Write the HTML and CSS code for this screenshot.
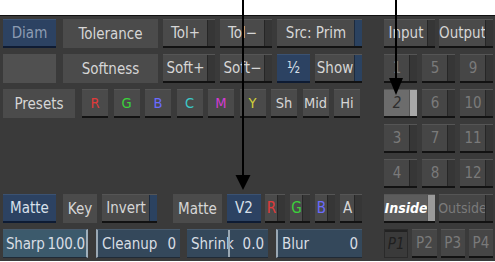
FILE: index.html
```html
<!DOCTYPE html>
<html>
<head>
<meta charset="utf-8">
<link rel="stylesheet" href="styles.css">
</head>
<body>
<div class="screen">
  <div class="topstrip"></div>
  <div class="panel">
    <div class="left">
      <div class="row">
        <div class="b blue dim w53">Diam</div>
        <div class="b flat w95 ml7">Tolerance</div>
        <div class="b raised tab w52 ml5">Tol+</div>
        <div class="b raised tab w52 ml5">Tol−</div>
        <div class="b raised tab bluetab w85 ml5">Src: Prim</div>
      </div>
      <div class="row">
        <div class="b blank w53"></div>
        <div class="b flat w95 ml7">Softness</div>
        <div class="b raised tab w52 ml5">Soft+</div>
        <div class="b raised tab w52 ml5">Soft−</div>
        <div class="b blue w33 ml5">½</div>
        <div class="b raised tab bluetab w47 ml5">Show</div>
      </div>
      <div class="row presets">
        <div class="b flat w72">Presets</div>
        <div class="b raised sq c-r">R</div>
        <div class="b raised sq c-g">G</div>
        <div class="b raised sq c-b">B</div>
        <div class="b raised sq c-c">C</div>
        <div class="b raised sq c-m">M</div>
        <div class="b raised sq c-y">Y</div>
        <div class="b raised sq">Sh</div>
        <div class="b raised sq">Mid</div>
        <div class="b raised sq">Hi</div>
      </div>
      <div class="row"></div>
      <div class="row"></div>
      <div class="row">
        <div class="b blue w53">Matte</div>
        <div class="b flat w34 ml7">Key</div>
        <div class="b raised tab bluetab w55 ml5">Invert</div>
        <div class="b flat w49 ml16">Matte</div>
        <div class="b blue w34 ml5">V2</div>
        <div class="b raised tab w20 ml4 c-r">R</div>
        <div class="b raised tab w20 ml5 c-g">G</div>
        <div class="b raised tab w20 ml5 c-b">B</div>
        <div class="b raised tab w22 ml5">A</div>
      </div>
      <div class="row">
        <div class="f sharp w85"><span>Sharp</span><span>100.0</span></div>
        <div class="f lline w84 ml8"><span>Cleanup</span><span>0</span></div>
        <div class="f w81 ml7 shrink"><span>Shrink</span><span>0.0</span></div>
        <div class="f lline w86 ml8"><span>Blur</span><span>0</span></div>
      </div>
    </div>
    <div class="right">
      <div class="two">
        <div class="b raised tab">Input</div>
        <div class="b raised tab">Output</div>
      </div>
      <div class="three">
        <div class="b raised tab num">1</div>
        <div class="b raised tab num">5</div>
        <div class="b raised tab num">9</div>
      </div>
      <div class="three">
        <div class="b raised tab num sel">2</div>
        <div class="b raised tab num">6</div>
        <div class="b raised tab num">10</div>
      </div>
      <div class="three">
        <div class="b raised tab num">3</div>
        <div class="b raised tab num">7</div>
        <div class="b raised tab num">11</div>
      </div>
      <div class="three">
        <div class="b raised tab num">4</div>
        <div class="b raised tab num">8</div>
        <div class="b raised tab num">12</div>
      </div>
      <div class="two">
        <div class="b raised tab inside">Inside</div>
        <div class="b raised tab num small">Outside</div>
      </div>
      <div class="four">
        <div class="b pone">P1</div>
        <div class="b raised num">P2</div>
        <div class="b raised num">P3</div>
        <div class="b raised num">P4</div>
      </div>
    </div>
  </div>
  <svg class="arrows" width="495" height="262" viewBox="0 0 495 262">
    <line x1="243" y1="0" x2="243" y2="177" stroke="#000" stroke-width="2"/>
    <polygon points="235.5,175 250.5,175 243,190" fill="#000"/>
    <line x1="396" y1="0" x2="396" y2="80" stroke="#000" stroke-width="2"/>
    <polygon points="389,78 403,78 396,95" fill="#000"/>
  </svg>
</div>
</body>
</html>
```
FILE: styles.css
```css
html, body {
  margin: 0;
  padding: 0;
  background: #fff;
}
.screen {
  position: relative;
  width: 495px;
  height: 262px;
  overflow: hidden;
  font-family: "DejaVu Sans Condensed", "DejaVu Sans", sans-serif;
  font-size: 15px;
}
.topstrip {
  height: 15px;
  background: #fff;
}
.panel {
  height: 246px;
  background: #3a3a3a;
  border-top: 1px solid #111;
  display: flex;
  padding-top: 3px;
  box-sizing: border-box;
}
.left {
  width: 366px;
  padding-left: 3px;
  display: grid;
  grid-template-rows: repeat(7, 29px);
  row-gap: 6px;
}
.right {
  margin-left: 15px;
  width: 109px;
  display: grid;
  grid-template-rows: repeat(7, 29px);
  row-gap: 6px;
}
.row {
  display: flex;
  align-items: stretch;
}
.presets { gap: 5.5px; }
.presets .w72 { margin-right: 1.5px; }
.two {
  display: grid;
  grid-template-columns: 51px 54px;
  column-gap: 4px;
}
.three {
  display: grid;
  grid-template-columns: repeat(3, 1fr);
  column-gap: 5px;
}
.four {
  display: grid;
  grid-template-columns: repeat(4, 1fr);
  column-gap: 4px;
}
.b {
  position: relative;
  display: flex;
  align-items: center;
  justify-content: center;
  box-sizing: border-box;
  color: #d6d6d6;
  white-space: nowrap;
}
.flat { background: #4b4b4b; }
.blank { background: #505050; }
.raised {
  background: #4a4a4a;
  border-top: 1px solid #555;
  box-shadow: 0 2px 0 #121212;
  height: 27px;
}
.tab { padding-right: 7px; }
.tab::after {
  content: "";
  position: absolute;
  right: 0;
  top: 0;
  bottom: 0;
  width: 7px;
  background: #363636;
  border-left: 1px solid #262626;
}
.bluetab::after {
  background: #2b4260;
  border-left: 1px solid #1c2a3e;
}
.blue {
  background: #2c4262;
  border-top: 1px solid #3b5272;
  border-bottom: 2px solid #0e1b33;
  color: #d8e0ea;
}
.dim { color: #8d9cb2; }
.sq { width: 26px; padding: 0; font-size: 14.5px; }
.c-r { color: #e03a3a; }
.c-g { color: #3bd23b; }
.c-b { color: #6b6bff; }
.c-c { color: #3cc8c8; }
.c-m { color: #d23cd2; }
.c-y { color: #d0d03a; }
.num { color: #7a7a7a; background: #464646; }
.small { font-size: 14px; }
.sel { background: #6c6c6c; color: #2e2e2e; font-style: italic; }
.sel::after { background: #a8a8a8; border-left: 1px solid #555; }
.inside {
  background: #5c5c5c;
  color: #fff;
  font-style: italic;
  font-weight: bold;
  font-size: 14px;
}
.inside::after { background: #9a9a9a; border-left: 1px solid #555; }
.pone {
  background: #3a3a3a;
  border: 1px solid #2a2a2a;
  box-shadow: inset 0 2px 0 #222;
  color: #1f1f1f;
  font-style: italic;
}
.f {
  position: relative;
  display: flex;
  align-items: center;
  justify-content: space-between;
  padding: 0 4px 0 4px;
  box-sizing: border-box;
  background: #34485b;
  border-top: 1px solid #485a6c;
  border-bottom: 1px solid #1f2a36;
  color: #d8dde4;
}
.sharp {
  background: #3c5a6c;
  border-right: 2px solid #9fb0bc;
  padding: 0 1px 0 3px;
  letter-spacing: -0.2px;
}
.lline { border-left: 2px solid #9aa8b4; }
.shrink::before {
  content: "";
  position: absolute;
  left: 41px;
  top: 0;
  bottom: 0;
  width: 2px;
  background: #9aa8b4;
}
.w20 { width: 20px; }
.w22 { width: 22px; }
.w33 { width: 33px; }
.w34 { width: 34px; }
.w47 { width: 47px; }
.w49 { width: 49px; }
.w52 { width: 52px; }
.w53 { width: 53px; }
.w55 { width: 55px; }
.w72 { width: 72px; }
.w81 { width: 81px; }
.w84 { width: 84px; }
.w85 { width: 85px; }
.w86 { width: 86px; }
.w95 { width: 95px; }
.ml4 { margin-left: 4px; }
.ml5 { margin-left: 5px; }
.ml7 { margin-left: 7px; }
.ml8 { margin-left: 8px; }
.ml16 { margin-left: 16px; }
.arrows {
  position: absolute;
  left: 0;
  top: 0;
  pointer-events: none;
}
```
